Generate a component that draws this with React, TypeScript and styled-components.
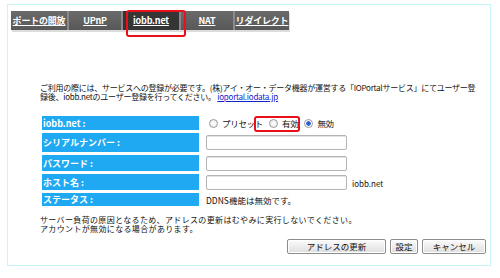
import styled, { createGlobalStyle } from 'styled-components';

const GlobalStyle = createGlobalStyle`
    html, body {
        margin: 0;
        padding: 0;
        background: #ffffff;
    }
    body {
        font-family: 'Noto Sans CJK JP', 'Noto Sans', sans-serif;
        color: #111111;
    }
`;

const Frame = styled.div`
    position: relative;
    box-sizing: border-box;
    margin: 4px 0 0 7px;
    width: 484px;
    height: 262px;
    border: 1px solid #c6f6f8;
    padding: 6px 4px 0 3px;
    display: flex;
    flex-direction: column;
`;

const TabBar = styled.div`
    display: flex;
    width: 278px;
    height: 19px;
    background: linear-gradient(#6a6a6a, #585858);
    box-shadow: 1px 2px 0 #dcdcdc;
`;

const Tab = styled.div<{ $width: number; $active?: boolean }>`
    box-sizing: border-box;
    width: ${(p) => p.$width}px;
    display: flex;
    align-items: center;
    justify-content: center;
    color: #ffffff;
    font-size: 9px;
    font-weight: 700;
    text-decoration: underline;
    letter-spacing: -0.2px;
    white-space: nowrap;
    background: ${(p) => (p.$active ? '#353535' : 'transparent')};
    border-right: 2px solid #8a8a8a;
    &:last-child {
        border-right: none;
    }
`;

const Highlight = styled.div<{ $x: number; $y: number; $w: number; $h: number }>`
    position: absolute;
    left: ${(p) => p.$x}px;
    top: ${(p) => p.$y}px;
    width: ${(p) => p.$w}px;
    height: ${(p) => p.$h}px;
    box-sizing: border-box;
    border: 2px solid #e8101a;
    border-radius: 3px;
`;

const Intro = styled.p`
    margin: 53px 0 0 29px;
    font-size: 8px;
    line-height: 9px;
    white-space: nowrap;
    letter-spacing: -0.25px;
`;

const Link = styled.a`
    color: #1020d0;
    text-decoration: underline;
`;

const Form = styled.div`
    margin: 15px 0 0 31px;
    display: flex;
    flex-direction: column;
    gap: 3px;
`;

const Row = styled.div<{ $height: number }>`
    display: grid;
    grid-template-columns: 157px 1fr;
    column-gap: 7px;
    height: ${(p) => p.$height}px;
`;

const Label = styled.div`
    background: #1fa9f2;
    color: #ffffff;
    font-size: 9px;
    font-weight: 700;
    display: flex;
    align-items: center;
    padding-left: 1px;
    white-space: nowrap;
`;

const Value = styled.div`
    display: flex;
    align-items: center;
    font-size: 8.5px;
    white-space: nowrap;
`;

const RadioGroup = styled.div`
    display: flex;
    align-items: center;
    margin-left: 3px;
`;

const RadioItem = styled.label`
    display: flex;
    align-items: center;
    gap: 4px;
    margin-right: 6px;
    font-size: 8.5px;
    letter-spacing: -0.3px;
    &:last-child {
        margin-right: 0;
    }
`;

const RadioDot = styled.span<{ $checked?: boolean }>`
    box-sizing: border-box;
    flex: 0 0 9px;
    width: 9px;
    height: 9px;
    border-radius: 50%;
    border: 1px solid #9a9a9a;
    background: ${(p) =>
        p.$checked
            ? 'radial-gradient(circle, #2f5fd0 0 2px, #ffffff 2.5px)'
            : 'radial-gradient(circle, #ffffff, #e6e6e6)'};
`;

const TextBox = styled.div`
    box-sizing: border-box;
    width: 141px;
    height: 15px;
    border: 1px solid #b4b4b4;
    border-radius: 2px;
    background: #ffffff;
    box-shadow: inset 0 1px 0 #e4e4e4;
`;

const Suffix = styled.span`
    margin-left: 5px;
    font-size: 8px;
    align-self: flex-end;
    margin-bottom: 1px;
`;

const Notes = styled.p`
    margin: 12px 0 0 29px;
    font-size: 8px;
    line-height: 9px;
    letter-spacing: 0.35px;
    white-space: nowrap;
`;

const Actions = styled.div`
    display: flex;
    justify-content: flex-end;
    gap: 4px;
    margin-top: 6px;
`;

const Button = styled.button<{ $width: number }>`
    box-sizing: border-box;
    width: ${(p) => p.$width}px;
    height: 15px;
    padding: 0;
    border: 1px solid #8c8c8c;
    border-radius: 2px;
    background: linear-gradient(#fbfbfb, #dedede);
    box-shadow: inset 0 0 0 1px #ffffff;
    font-family: inherit;
    font-size: 8.5px;
    color: #111111;
    line-height: 1;
`;

const App = (): JSX.Element => {
    return (
        <>
            <GlobalStyle />
            <Frame>
                <TabBar>
                    <Tab $width={58}>ポートの開放</Tab>
                    <Tab $width={54}>UPnP</Tab>
                    <Tab $width={58} $active={true}>
                        iobb.net
                    </Tab>
                    <Tab $width={54}>NAT</Tab>
                    <Tab $width={54}>リダイレクト</Tab>
                </TabBar>
                <Highlight $x={118} $y={5} $w={60} $h={27} />
                <Intro>
                    ご利用の際には、サービスへの登録が必要です。(株)アイ・オー・データ機器が運営する「IOPortalサービス」にてユーザー登
                    <br />
                    録後、iobb.netのユーザー登録を行ってください。 <Link href="#">ioportal.iodata.jp</Link>
                </Intro>
                <Form>
                    <Row $height={14}>
                        <Label>iobb.net :</Label>
                        <Value>
                            <RadioGroup>
                                <RadioItem>
                                    <RadioDot />
                                    プリセット
                                </RadioItem>
                                <RadioItem>
                                    <RadioDot />
                                    有効
                                </RadioItem>
                                <RadioItem>
                                    <RadioDot $checked={true} />
                                    無効
                                </RadioItem>
                            </RadioGroup>
                        </Value>
                    </Row>
                    <Row $height={19}>
                        <Label>シリアルナンバー :</Label>
                        <Value>
                            <TextBox />
                        </Value>
                    </Row>
                    <Row $height={16}>
                        <Label>パスワード :</Label>
                        <Value>
                            <TextBox />
                        </Value>
                    </Row>
                    <Row $height={16}>
                        <Label>ホスト名 :</Label>
                        <Value>
                            <TextBox />
                            <Suffix>iobb.net</Suffix>
                        </Value>
                    </Row>
                    <Row $height={10}>
                        <Label>ステータス :</Label>
                        <Value>DDNS機能は無効です。</Value>
                    </Row>
                </Form>
                <Highlight $x={246} $y={111} $w={46} $h={16} />
                <Notes>
                    サーバー負荷の原因となるため、アドレスの更新はむやみに実行しないでください。
                    <br />
                    アカウントが無効になる場合があります。
                </Notes>
                <Actions>
                    <Button $width={99}>アドレスの更新</Button>
                    <Button $width={28}>設定</Button>
                    <Button $width={64}>キャンセル</Button>
                </Actions>
            </Frame>
        </>
    );
};

export default App;
